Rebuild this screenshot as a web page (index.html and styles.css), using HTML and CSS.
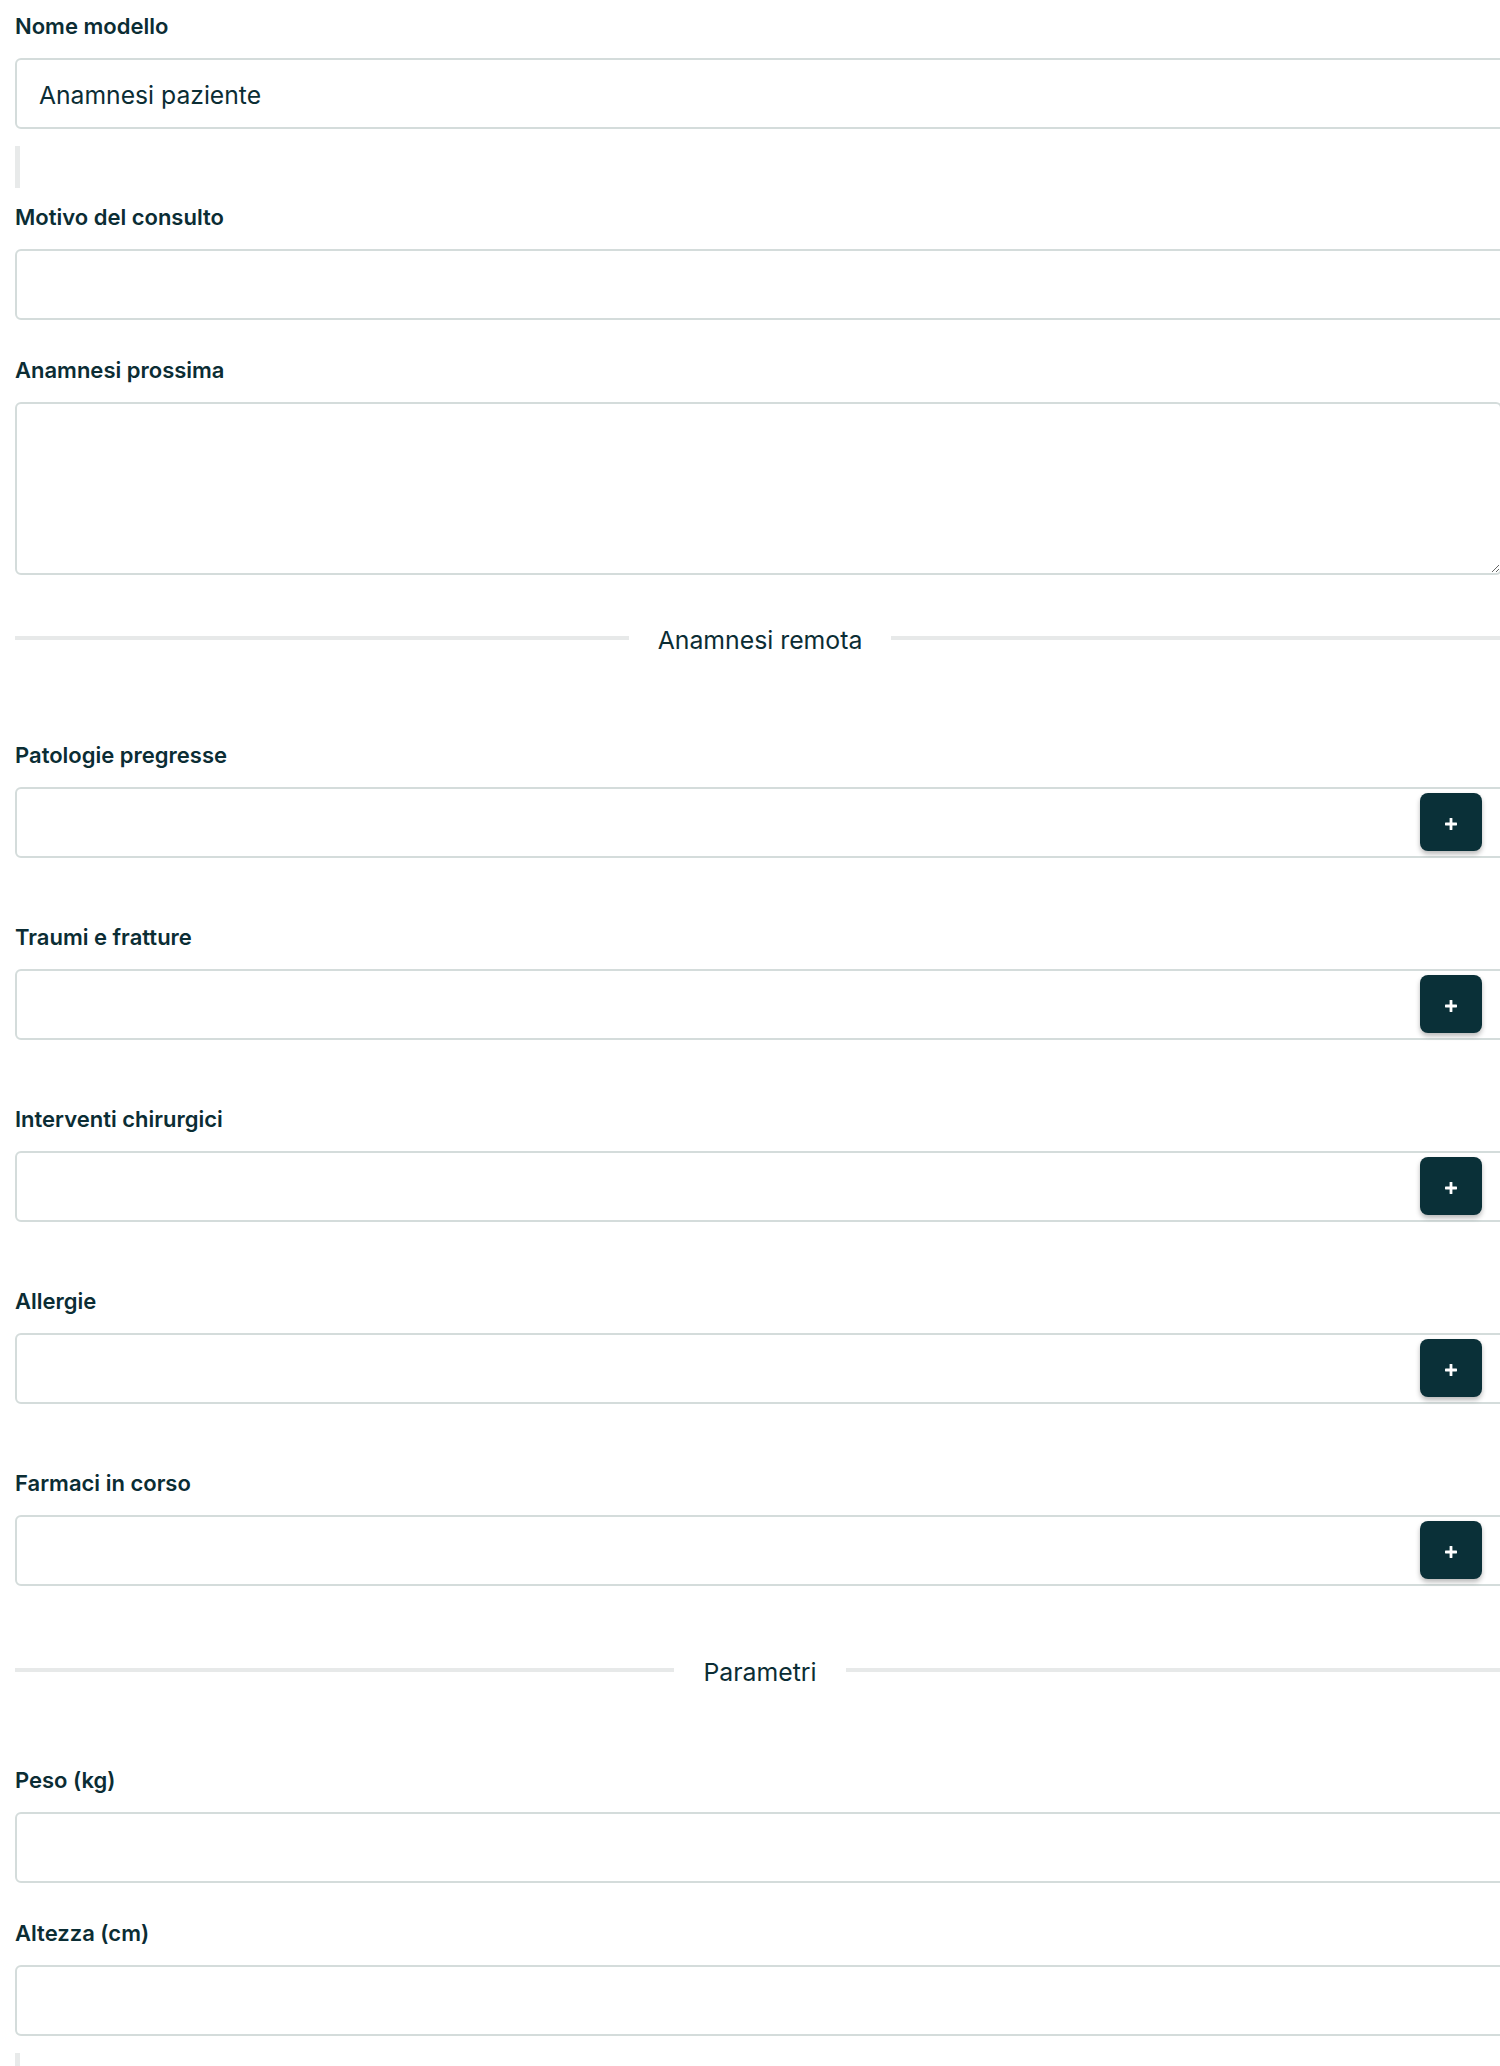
FILE: index.html
```html
<!DOCTYPE html>
<html lang="it">
<head>
<meta charset="utf-8">
<title>Modello anamnesi</title>
<link rel="stylesheet" href="styles.css">
</head>
<body>
<div class="form">
  <div class="field field-first">
    <label class="label">Nome modello</label>
    <input class="input" type="text" value="Anamnesi paziente">
  </div>
  <div class="spacer spacer-top"></div>

  <div class="field field-after-spacer">
    <label class="label">Motivo del consulto</label>
    <input class="input" type="text">
  </div>

  <div class="field field-plain">
    <label class="label">Anamnesi prossima</label>
    <textarea class="textarea"></textarea>
  </div>

  <div class="divider divider-remota"><span class="divider-text">Anamnesi remota</span></div>

  <div class="field field-add-first">
    <label class="label">Patologie pregresse</label>
    <div class="input-wrap">
      <input class="input" type="text">
      <button class="add-btn" type="button"><svg width="12" height="12" viewBox="0 0 12 12"><rect x="4.6" y="0" width="2.8" height="12" rx="0.6" fill="#fff"/><rect x="0" y="4.6" width="12" height="2.8" rx="0.6" fill="#fff"/></svg></button>
    </div>
  </div>

  <div class="field field-add">
    <label class="label">Traumi e fratture</label>
    <div class="input-wrap">
      <input class="input" type="text">
      <button class="add-btn" type="button"><svg width="12" height="12" viewBox="0 0 12 12"><rect x="4.6" y="0" width="2.8" height="12" rx="0.6" fill="#fff"/><rect x="0" y="4.6" width="12" height="2.8" rx="0.6" fill="#fff"/></svg></button>
    </div>
  </div>

  <div class="field field-add">
    <label class="label">Interventi chirurgici</label>
    <div class="input-wrap">
      <input class="input" type="text">
      <button class="add-btn" type="button"><svg width="12" height="12" viewBox="0 0 12 12"><rect x="4.6" y="0" width="2.8" height="12" rx="0.6" fill="#fff"/><rect x="0" y="4.6" width="12" height="2.8" rx="0.6" fill="#fff"/></svg></button>
    </div>
  </div>

  <div class="field field-add">
    <label class="label">Allergie</label>
    <div class="input-wrap">
      <input class="input" type="text">
      <button class="add-btn" type="button"><svg width="12" height="12" viewBox="0 0 12 12"><rect x="4.6" y="0" width="2.8" height="12" rx="0.6" fill="#fff"/><rect x="0" y="4.6" width="12" height="2.8" rx="0.6" fill="#fff"/></svg></button>
    </div>
  </div>

  <div class="field field-add">
    <label class="label">Farmaci in corso</label>
    <div class="input-wrap">
      <input class="input" type="text">
      <button class="add-btn" type="button"><svg width="12" height="12" viewBox="0 0 12 12"><rect x="4.6" y="0" width="2.8" height="12" rx="0.6" fill="#fff"/><rect x="0" y="4.6" width="12" height="2.8" rx="0.6" fill="#fff"/></svg></button>
    </div>
  </div>

  <div class="divider divider-parametri"><span class="divider-text">Parametri</span></div>

  <div class="field field-param-first">
    <label class="label">Peso (kg)</label>
    <input class="input" type="text">
  </div>

  <div class="field field-plain">
    <label class="label">Altezza (cm)</label>
    <input class="input" type="text">
  </div>
  <div class="spacer spacer-bottom"></div>
</div>
</body>
</html>
```

FILE: styles.css
```css
html {
  overflow: hidden;
}

body {
  margin: 0;
  background: #ffffff;
  font-family: Inter, "Noto Sans", sans-serif;
  color: #0b2d34;
}

.form {
  display: flex;
  flex-direction: column;
  width: 1490px;
  padding: 13px 0 0 15px;
}

.field {
  display: flex;
  flex-direction: column;
}

.label {
  font-size: 22px;
  line-height: 26px;
  font-weight: 600;
  color: #0b2d34;
  margin-bottom: 19px;
}

.input {
  box-sizing: border-box;
  width: 100%;
  height: 71px;
  margin: 0;
  padding: 3px 22px 0;
  border: 2px solid #d4dcdb;
  border-radius: 6px;
  background: #ffffff;
  font-family: Inter, "Noto Sans", sans-serif;
  font-size: 24.7px;
  color: #0b2d34;
  outline: none;
}

.textarea {
  box-sizing: border-box;
  width: calc(100% - 3px);
  height: 173px;
  margin: 0;
  padding: 14px 22px;
  border: 2px solid #d4dcdb;
  border-radius: 6px;
  background: #ffffff;
  font-family: Inter, "Noto Sans", sans-serif;
  font-size: 25px;
  color: #0b2d34;
  outline: none;
}

.spacer {
  width: 5px;
  height: 42px;
  background: #e8eaea;
}

.spacer-top {
  margin-top: 17px;
}

.spacer-bottom {
  margin-top: 17px;
}

.field-after-spacer {
  margin-top: 16px;
}

.field-plain {
  margin-top: 37px;
}

.field-add-first {
  margin-top: 89px;
}

.field-add {
  margin-top: 66px;
}

.field-param-first {
  margin-top: 82px;
}

.divider {
  display: flex;
  align-items: center;
  gap: 29px;
  height: 30px;
}

.divider::before,
.divider::after {
  content: "";
  flex: 1;
  height: 4px;
  background: #e7e9e9;
}

.divider-text {
  font-size: 24.8px;
  line-height: 30px;
  font-weight: 400;
  color: #0b2d34;
  margin-top: 3px;
}

.divider-remota {
  margin-top: 48px;
}

.divider-parametri {
  margin-top: 69px;
}

.input-wrap {
  position: relative;
}

.add-btn {
  position: absolute;
  right: 23px;
  top: 6px;
  width: 62px;
  height: 58px;
  padding: 0;
  border: none;
  border-radius: 8px;
  background: #0a3038;
  box-shadow: 0 3px 5px rgba(0, 0, 0, 0.28);
  display: flex;
  align-items: center;
  justify-content: center;
  cursor: pointer;
}

.add-btn svg {
  display: block;
  margin-top: 3px;
}
```
